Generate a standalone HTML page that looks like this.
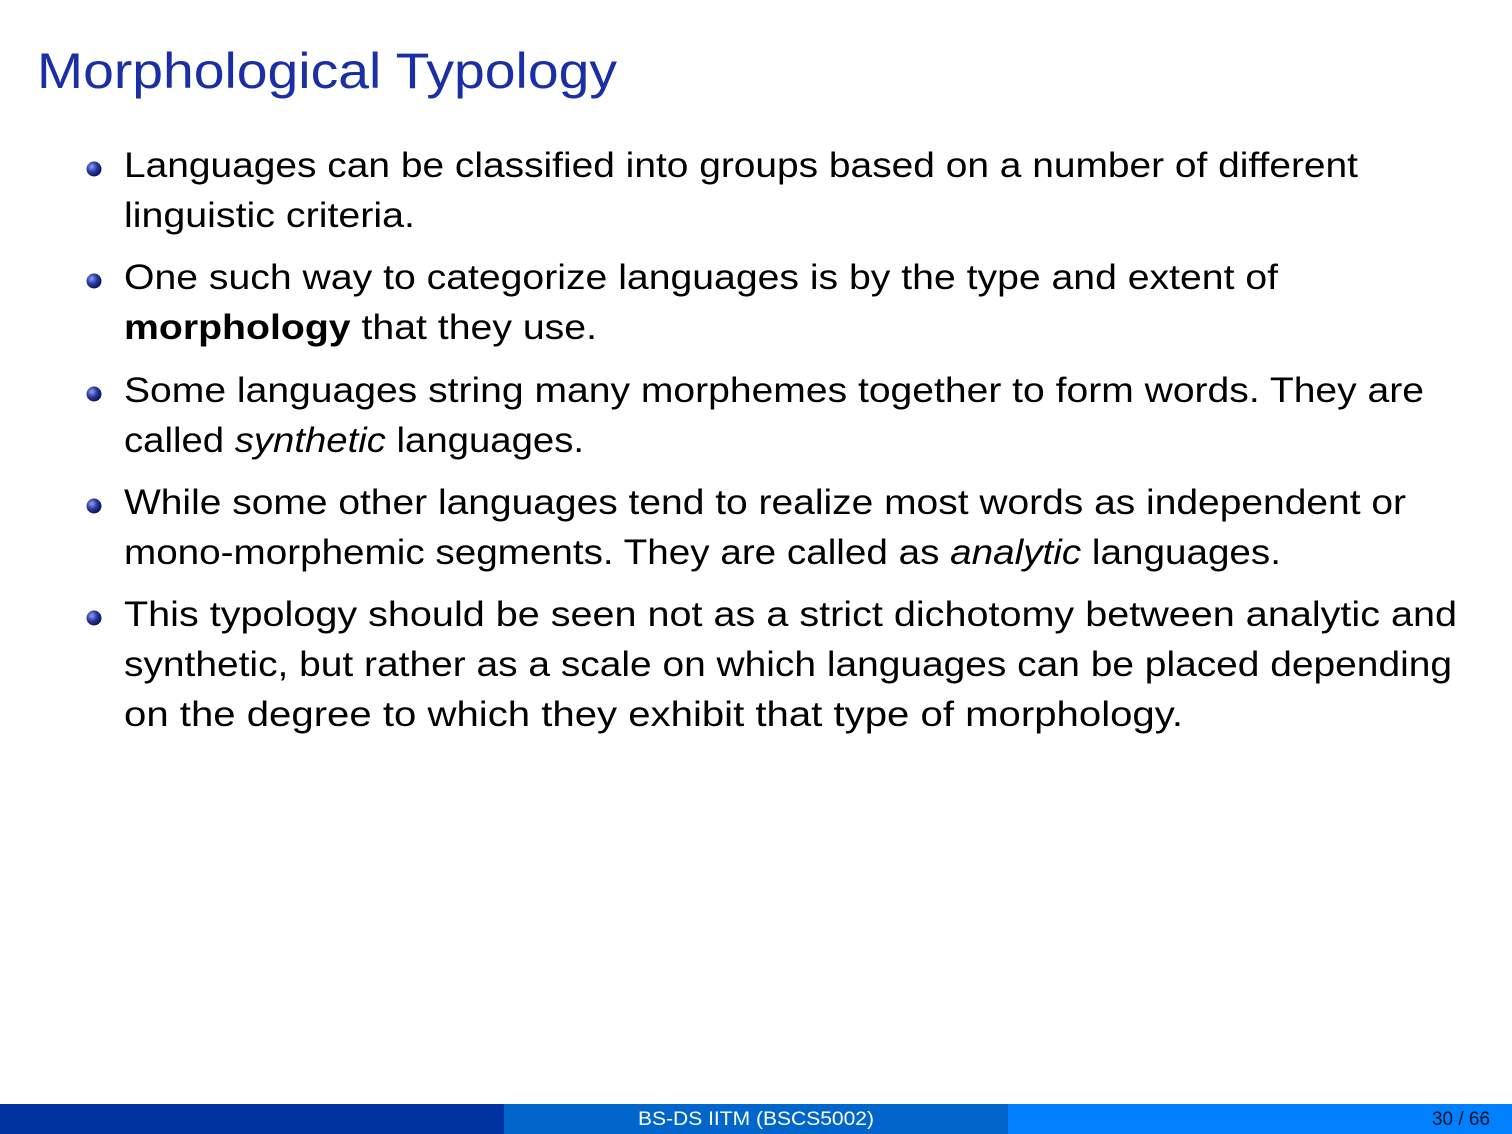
<!DOCTYPE html>
<html><head><meta charset="utf-8"><style>
html,body{margin:0;padding:0;background:#fff;}
svg{display:block}
text{font-family:"Liberation Sans",sans-serif;}
</style></head><body>
<svg width="1512" height="1134" viewBox="0 0 1512 1134">
<defs>
<radialGradient id="b" cx="0.35" cy="0.35" r="0.7">
<stop offset="0" stop-color="#8fa0ff"/><stop offset="0.5" stop-color="#2a3a9e"/><stop offset="1" stop-color="#0a1050"/>
</radialGradient>
</defs>
<rect width="1512" height="1134" fill="#fff"/>
<text x="37" y="88" font-size="50" fill="#1a2fa6" textLength="580" lengthAdjust="spacingAndGlyphs">Morphological Typology</text>
<g fill="url(#b)">
<circle cx="94" cy="169" r="7.5"/>
<circle cx="94" cy="281" r="7.5"/>
<circle cx="94" cy="394" r="7.5"/>
<circle cx="94" cy="506" r="7.5"/>
<circle cx="94" cy="618" r="7.5"/>
</g>
<g font-size="35" fill="#000">
<text x="124" y="177" textLength="1234" lengthAdjust="spacingAndGlyphs">Languages can be classified into groups based on a number of different</text>
<text x="124" y="227" textLength="291" lengthAdjust="spacingAndGlyphs">linguistic criteria.</text>
<text x="124" y="289" textLength="1154" lengthAdjust="spacingAndGlyphs">One such way to categorize languages is by the type and extent of</text>
<text x="124" y="339" textLength="473" lengthAdjust="spacingAndGlyphs"><tspan font-weight="bold">morphology</tspan> that they use.</text>
<text x="124" y="402" textLength="1300" lengthAdjust="spacingAndGlyphs">Some languages string many morphemes together to form words.  They are</text>
<text x="124" y="452" textLength="460" lengthAdjust="spacingAndGlyphs">called <tspan font-style="italic">synthetic</tspan> languages.</text>
<text x="124" y="514" textLength="1282" lengthAdjust="spacingAndGlyphs">While some other languages tend to realize most words as independent or</text>
<text x="124" y="564" textLength="1157" lengthAdjust="spacingAndGlyphs">mono-morphemic segments.  They are called as <tspan font-style="italic">analytic</tspan> languages.</text>
<text x="124" y="626" textLength="1333" lengthAdjust="spacingAndGlyphs">This typology should be seen not as a strict dichotomy between analytic and</text>
<text x="124" y="676" textLength="1328" lengthAdjust="spacingAndGlyphs">synthetic, but rather as a scale on which languages can be placed depending</text>
<text x="124" y="726" textLength="1059" lengthAdjust="spacingAndGlyphs">on the degree to which they exhibit that type of morphology.</text>
</g>
<rect x="0" y="1104" width="504" height="30" fill="#0033a0"/>
<rect x="504" y="1104" width="504" height="30" fill="#0066cc"/>
<rect x="1008" y="1104" width="504" height="30" fill="#0080ff"/>
<text x="638" y="1125" font-size="19" fill="#fff" textLength="236" lengthAdjust="spacingAndGlyphs">BS-DS IITM (BSCS5002)</text>
<text x="1432" y="1125" font-size="19" fill="#000" fill-opacity="0.85" textLength="58" lengthAdjust="spacingAndGlyphs">30 / 66</text>
</svg>
</body></html>
